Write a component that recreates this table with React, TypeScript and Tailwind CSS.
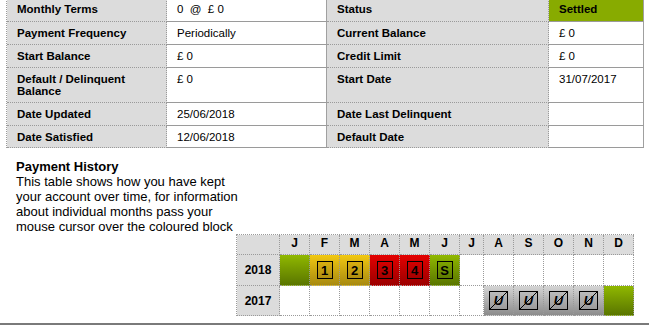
import React from 'react';

type Row = {
  label: string;
  value: string;
  label2: string;
  value2: string;
  h: string;
  status?: boolean;
};

const rows: Row[] = [
  { label: 'Monthly Terms', value: '0  @  £ 0', label2: 'Status', value2: 'Settled', h: 'h-[24px]', status: true },
  { label: 'Payment Frequency', value: 'Periodically', label2: 'Current Balance', value2: '£ 0', h: 'h-[23px]' },
  { label: 'Start Balance', value: '£ 0', label2: 'Credit Limit', value2: '£ 0', h: 'h-[23px]' },
  { label: 'Default / Delinquent Balance', value: '£ 0', label2: 'Start Date', value2: '31/07/2017', h: 'h-[35px]' },
  { label: 'Date Updated', value: '25/06/2018', label2: 'Date Last Delinquent', value2: '', h: 'h-[23px]' },
  { label: 'Date Satisfied', value: '12/06/2018', label2: 'Default Date', value2: '', h: 'h-[22px]' },
];

type Status = '' | 'ok' | '1' | '2' | '3' | '4' | 'S' | 'U';

const months = ['J', 'F', 'M', 'A', 'M', 'J', 'J', 'A', 'S', 'O', 'N', 'D'];

const history: { year: string; cells: Status[] }[] = [
  { year: '2018', cells: ['ok', '1', '2', '3', '4', 'S', '', '', '', '', '', ''] },
  { year: '2017', cells: ['', '', '', '', '', '', '', 'U', 'U', 'U', 'U', 'ok'] },
];

const cellBg: Record<Status, string> = {
  '': 'bg-white',
  ok: 'bg-linear-to-b from-[#90b800] to-[#5a7600]',
  '1': 'bg-linear-to-b from-[#f2c810] to-[#a88a10]',
  '2': 'bg-linear-to-b from-[#f2c810] to-[#a88a10]',
  '3': 'bg-linear-to-b from-[#e40000] to-[#9c0000]',
  '4': 'bg-linear-to-b from-[#e40000] to-[#9c0000]',
  S: 'bg-linear-to-b from-[#90b800] to-[#5a7600]',
  U: 'bg-linear-to-b from-[#d4d4d4] to-[#8c8c8c]',
};

const boxBg: Record<Status, string> = {
  '': '',
  ok: '',
  '1': 'bg-linear-to-b from-[#d8ae10] to-[#b08e10]',
  '2': 'bg-linear-to-b from-[#d8ae10] to-[#b08e10]',
  '3': 'bg-linear-to-b from-[#d40000] to-[#a40000]',
  '4': 'bg-linear-to-b from-[#d40000] to-[#a40000]',
  S: 'bg-linear-to-b from-[#7ea400] to-[#5e7c00]',
  U: 'bg-linear-to-b from-[#bcbcbc] to-[#9a9a9a]',
};

function Marker({ s }: { s: Status }) {
  if (s === '' || s === 'ok') return null;
  return (
    <div
      className={`relative flex items-center justify-center border border-black text-[13px] font-bold leading-none text-black ${boxBg[s]} ${
        s === 'U' ? 'h-[19px] w-[19px]' : 'h-[18px] w-[16px]'
      }`}
    >
      {s === 'U' && (
        <svg className="absolute inset-0 h-full w-full" viewBox="0 0 17 17">
          <line x1="0" y1="17" x2="17" y2="0" stroke="#000" strokeWidth="1" />
        </svg>
      )}
      <span className={`relative ${s === 'U' ? 'italic' : ''}`}>{s}</span>
    </div>
  );
}

export default function App() {
  const label = 'bg-[#dcdcdc] font-bold';
  const cell = 'border-b border-dotted border-[#9a9a9a] pl-[10px] pr-[6px] pt-[5px] leading-[12px] whitespace-pre-wrap';

  return (
    <div className="h-[326px] w-[649px] overflow-hidden bg-white font-['Liberation_Sans',Arial,sans-serif] text-black">
      {/* Account summary */}
      <div className="-mt-[2px] ml-[6px] grid w-[638px] grid-cols-[160px_160px_222px_95px] border-l border-dotted border-[#9a9a9a] text-[11.5px]">
        {rows.map(r => (
          <React.Fragment key={r.label}>
            <div className={`${cell} ${r.h} ${label} border-r border-r-[#9a9a9a]`}>{r.label}</div>
            <div className={`${cell} ${r.h} border-r border-solid border-r-[#a0a0a0]`}>{r.value}</div>
            <div className={`${cell} ${r.h} ${label} border-r border-r-[#9a9a9a]`}>{r.label2}</div>
            <div
              className={`${cell} ${r.h} border-r border-solid border-r-[#a0a0a0] ${
                r.status ? 'bg-[#88ab00] font-bold' : ''
              }`}
            >
              {r.value2}
            </div>
          </React.Fragment>
        ))}
      </div>

      {/* Payment history */}
      <div className="ml-[16px] mt-[11px] w-[229px] text-[13px] leading-[15px]">
        <p className="font-bold">Payment History</p>
        <p>
          This table shows how you have kept your account over time, for information about individual months pass
          your mouse cursor over the coloured block
        </p>
      </div>

      <div className="ml-[236px] grid w-[398px] grid-cols-[43px_30px_30px_30px_30px_30px_30px_24px_30px_30px_30px_30px_30px] border-l border-t border-dotted border-[#9a9a9a] text-[12px] font-bold">
        <div className="h-[20px] border-b border-r border-dotted border-[#9a9a9a] bg-[#dcdcdc]" />
        {months.map((m, i) => (
          <div
            key={i}
            className="flex h-[20px] items-end justify-center border-b border-r border-dotted border-[#9a9a9a] bg-[#dcdcdc] pb-[2px]"
          >
            {m}
          </div>
        ))}
        {history.map((h, ri) => (
          <React.Fragment key={h.year}>
            <div
              className={`flex items-center justify-center border-b border-r border-dotted border-[#9a9a9a] bg-[#dcdcdc] ${
                ri === 0 ? 'h-[31px]' : 'h-[30px]'
              }`}
            >
              {h.year}
            </div>
            {h.cells.map((s, i) => (
              <div
                key={i}
                className={`flex items-center justify-center border-b border-r border-dotted border-[#9a9a9a] ${cellBg[s]} ${
                  ri === 0 ? 'h-[31px]' : 'h-[30px]'
                }`}
              >
                <Marker s={s} />
              </div>
            ))}
          </React.Fragment>
        ))}
      </div>

      <div className="mt-[7px] h-[2px] w-full bg-[#7a7a7a]" />
    </div>
  );
}
